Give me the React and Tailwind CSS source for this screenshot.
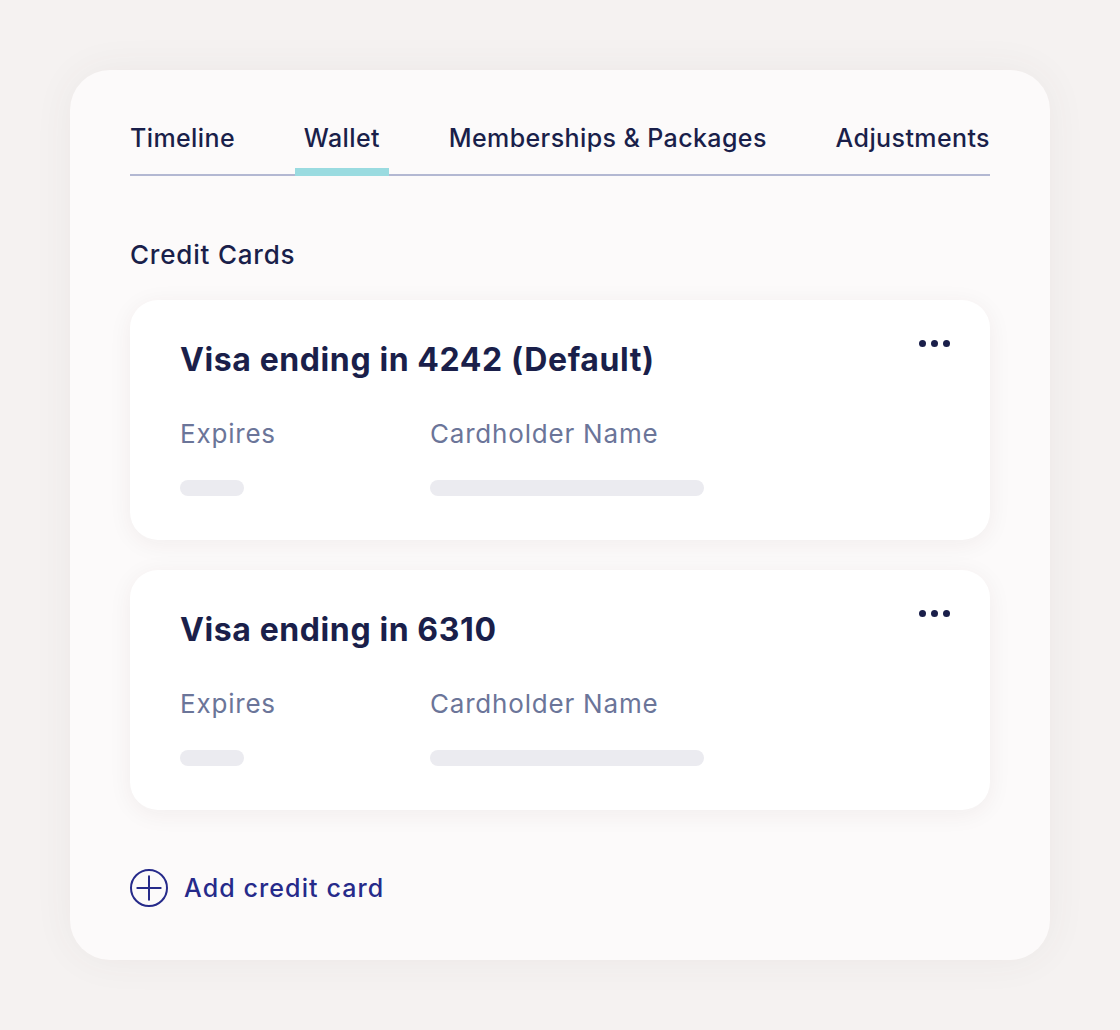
import { Plus } from 'lucide-react';

const tabs = ['Timeline', 'Wallet', 'Memberships & Packages', 'Adjustments'];

const cards = [
  { title: 'Visa ending in 4242 (Default)' },
  { title: 'Visa ending in 6310' },
];

function CardItem({ title }) {
  return (
    <div className="relative rounded-[28px] bg-white px-[50px] pt-[38px] pb-[44px] shadow-[0_4px_24px_rgba(60,40,40,0.06)]">
      <div className="absolute right-[40px] top-[40px] flex gap-[5px]">
        <span className="h-[7px] w-[7px] rounded-full bg-[#1a1f4a]" />
        <span className="h-[7px] w-[7px] rounded-full bg-[#1a1f4a]" />
        <span className="h-[7px] w-[7px] rounded-full bg-[#1a1f4a]" />
      </div>
      <h3 className="text-[32px] font-bold leading-[44px] tracking-[0.6px] text-[#1a1f4a]">{title}</h3>
      <div className="mt-[36px] flex">
        <div className="w-[250px]">
          <p className="text-[26px] leading-[32px] tracking-[0.8px] text-[#6b7599]">Expires</p>
          <div className="mt-[30px] h-[16px] w-[64px] rounded-full bg-[#ebebf0]" />
        </div>
        <div>
          <p className="text-[26px] leading-[32px] tracking-[0.8px] text-[#6b7599]">Cardholder Name</p>
          <div className="mt-[30px] h-[16px] w-[274px] rounded-full bg-[#ebebf0]" />
        </div>
      </div>
    </div>
  );
}

export default function App() {
  return (
    <div className="min-h-[1030px] bg-[#f5f2f1] p-[70px] font-['Inter',sans-serif]">
      <div className="w-[980px] rounded-[40px] bg-[#fcfafa] px-[60px] pt-[40px] pb-[53px] shadow-[0_0_40px_rgba(80,60,60,0.06)]">
        <div className="flex justify-between border-b-2 border-[#b3b8d2]">
          {tabs.map((tab) => (
            <div key={tab} className="relative pt-[10px] pb-[18px]">
              <span className="text-[25px] font-medium leading-[36px] tracking-[0.4px] text-[#1a1f4a]">{tab}</span>
              {tab === 'Wallet' ? (
                <div className="absolute -left-[9px] -right-[9px] -bottom-[2px] h-[8px] bg-[#9adbe0]" />
              ) : null}
            </div>
          ))}
        </div>

        <h2 className="mt-[59px] text-[26px] font-medium leading-[40px] tracking-[0.8px] text-[#1a1f4a]">Credit Cards</h2>

        <div className="mt-[25px] flex flex-col gap-[30px]">
          {cards.map((card) => (
            <CardItem key={card.title} title={card.title} />
          ))}
        </div>

        <button className="mt-[59px] flex items-center gap-[16px] text-[#262a8a]">
          <span className="flex h-[38px] w-[38px] items-center justify-center rounded-full border-2 border-[#262a8a]">
            <Plus className="h-[40px] w-[40px] shrink-0" strokeWidth={1.2} />
          </span>
          <span className="text-[25px] font-medium leading-[36px] tracking-[1.1px]">Add credit card</span>
        </button>
      </div>
    </div>
  );
}
